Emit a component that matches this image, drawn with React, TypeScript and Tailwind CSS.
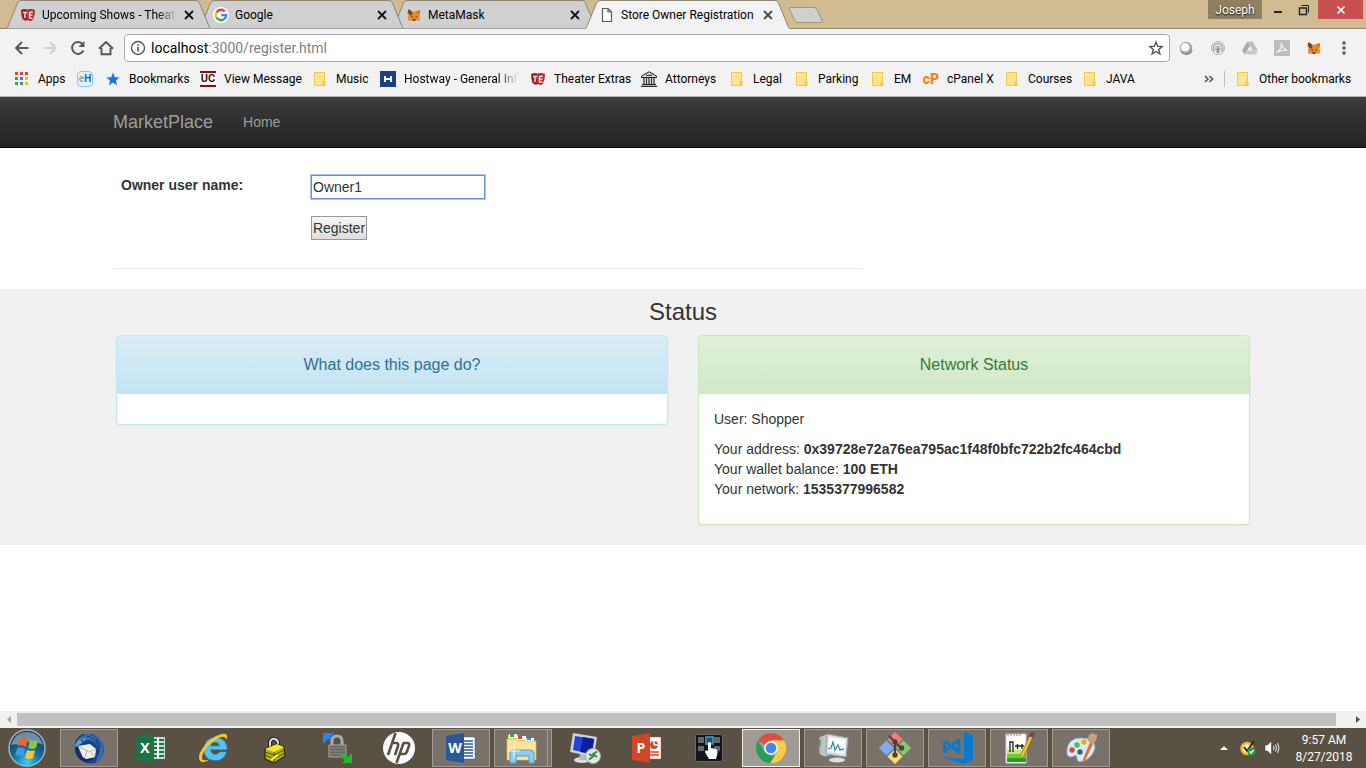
import React from 'react';

type IconProps = { className?: string };

const TEIcon = ({ className = 'size-4' }: IconProps) => (
  <svg viewBox="0 0 16 16" className={className} aria-hidden="true">
    <path d="M1 3 Q4 1.500 7.500 2.500 L8 13 Q5 15 2.500 12 Q1 8 1 3Z" fill="#a31f24" />
    <path d="M7.500 2.500 Q11 1.500 15 3 Q15 9 13 12.500 Q11 15 8 13Z" fill="#b3282d" />
    <path d="M3 5.500h4M5 5.500v5.500M9.500 5.200h3.500M9.500 5.200v5.800h3M9.500 8h3" stroke="#f7dcdc" strokeWidth="1.500" fill="none" />
  </svg>
);

const GoogleIcon = () => (
  <svg viewBox="0 0 16 16" className="size-4" aria-hidden="true">
    <circle cx="8" cy="8" r="8" fill="#fff" />
    <g fill="none" strokeWidth="2.400">
      <path d="M11.800 4.300A5.200 5.200 0 0 0 3.500 5.500" stroke="#ea4335" />
      <path d="M3.500 5.500A5.200 5.200 0 0 0 3.500 10.600" stroke="#fbbc05" />
      <path d="M3.500 10.600A5.200 5.200 0 0 0 11.300 12" stroke="#34a853" />
      <path d="M11.300 12A5.200 5.200 0 0 0 13.200 8.100H8.200" stroke="#4285f4" />
    </g>
  </svg>
);

const FoxIcon = () => (
  <svg viewBox="0 0 16 16" className="size-4" aria-hidden="true">
    <path d="M2.500 2l3.500 2.500h4L14 3l-.5 5 .5 4-1 2-3-1-2 1-3-.5-2.500.5-.5-4L3 7Z" fill="#f08a24" />
    <path d="M2.500 2l3.500 2.500.5 3.500L4 8.500 1.500 6Z" fill="#7b4a28" />
    <path d="M14 3l-4 1.500 1 2.500 2.500.5Z" fill="#d9731a" />
    <path d="M6 12h4l-1 2H7Z" fill="#6b4a34" />
    <path d="M5.500 9.500l1.500.8M11 9.500l-1.500.8" stroke="#3a2a1c" />
    <path d="M2.500 14L5 11.500l.5 2Z" fill="#c9a17d" />
  </svg>
);

const PageIcon = () => (
  <svg viewBox="0 0 16 16" className="size-4" fill="#fff" stroke="#5a5a5a" strokeWidth="1.200" aria-hidden="true">
    <path d="M3.500 1.500h5.500l3.500 3.500v9.500h-9ZM9 1.500V5h3.500" />
  </svg>
);

const FolderIcon = () => (
  <svg viewBox="0 0 16 16" className="size-4 shrink-0" aria-hidden="true">
    <path d="M2.500 1.500h10v13h-10Z" fill="#ffe58f" stroke="#f0c948" />
    <path d="M11.500 10.500h1.500v4h-2v-3.500Z" fill="#ffe58f" stroke="#e9bd35" />
  </svg>
);

const AppsIcon = () => (
  <svg viewBox="0 0 16 16" className="size-4" aria-hidden="true">
    <path d="M1 1h3v3h-3zM6 1h3v3h-3zM11 1h3v3h-3z" fill="#ea4335" />
    <path d="M1 6h3v3h-3z" fill="#34a853" />
    <path d="M6 6h3v3h-3z" fill="#1e88e5" />
    <path d="M11 6h3v3h-3z" fill="#fbbc05" />
    <path d="M1 11h3v3h-3zM6 11h3v3h-3z" fill="#34a853" />
    <path d="M11 11h3v3h-3z" fill="#fbbc05" />
  </svg>
);

const StarIcon = () => (
  <svg viewBox="0 0 16 16" className="size-4" aria-hidden="true">
    <path d="M8 1.500l1.800 4.700 4.900.2-3.800 3.100 1.300 4.900L8 11.600l-4.200 2.800 1.300-4.900L1.300 6.400l4.900-.2Z" fill="#1a73e8" />
  </svg>
);

const CourtIcon = () => (
  <svg viewBox="0 0 16 16" className="size-4" aria-hidden="true">
    <path d="M.5 5L8 .8 15.500 5v1.500H.5Z" fill="#d8d8d8" stroke="#222" />
    <path d="M5 4.300h6" stroke="#222" />
    <path d="M3 7v6M5.500 7v6M8 7v6M10.500 7v6M13 7v6" stroke="#333" strokeWidth="1.300" />
    <path d="M1 13.500h14M0 15.300h16" stroke="#222" strokeWidth="1.200" />
  </svg>
);

const EhIcon = () => (
  <span className="flex size-4 items-center justify-center rounded-sm border border-[#86c8f5] bg-[#e3f3fd] text-[10px] font-bold leading-none text-[#1568a8]">
    <span className="text-[#9aa5ad]">e</span>H
  </span>
);

const UcIcon = () => (
  <span className="flex size-4 items-center justify-center border-y-2 border-[#8c1010] bg-white text-[11px] font-bold leading-none text-[#5d0c0c]">
    UC
  </span>
);

const HostwayIcon = () => (
  <svg viewBox="0 0 16 16" className="size-4" aria-hidden="true">
    <path d="M0 0h16v16H0Z" fill="#1f3f86" />
    <path d="M5 5v6M11 5v6M5 8h6" stroke="#fff" strokeWidth="1.800" />
  </svg>
);

const CpanelIcon = () => (
  <span className="flex size-4 items-center justify-center text-sm font-black leading-none text-[#f58220]">cP</span>
);

type Tab = { title: string; icon: React.ReactNode; active?: boolean; layer: string; fade?: boolean };

const tabs: Tab[] = [
  { title: 'Upcoming Shows - Theater Extras', icon: <TEIcon />, layer: 'z-30', fade: true },
  { title: 'Google', icon: <GoogleIcon />, layer: 'z-20' },
  { title: 'MetaMask', icon: <FoxIcon />, layer: 'z-10' },
  { title: 'Store Owner Registration', icon: <PageIcon />, active: true, layer: 'z-40' },
];

const BrowserTab = ({ tab }: { tab: Tab }) => (
  <div className={`relative -mr-3 flex h-[29px] w-[205px] items-center pl-3.5 pr-3.5 pt-px ${tab.layer}`}>
    <svg viewBox="0 0 205 29" preserveAspectRatio="none" className="absolute inset-0 size-full" aria-hidden="true">
      <path d="M0 29 L1.500 27.500 L11.500 3 Q12.500 .5 15 .5 H190 Q192.500 .5 193.500 3 L203.500 27.500 L205 29Z" fill={tab.active ? '#f2f2f2' : '#d0d0d0'} />
      <path d="M0 28.500 L1.500 27.500 L11.500 3 Q12.500 .5 15 .5 H190 Q192.500 .5 193.500 3 L203.500 27.500 L205 28.500" fill="none" stroke="#8e8672" />
      {!tab.active && <path d="M0 28.500H205" stroke="#9d9d9d" />}
    </svg>
    <button type="button" className="relative flex min-w-0 flex-1 items-center gap-1.5 text-left">
      <span className="shrink-0">{tab.icon}</span>
      <span className={`flex-1 overflow-hidden whitespace-nowrap ${tab.fade ? '[mask-image:linear-gradient(to_right,#000_85%,transparent)]' : ''}`}>{tab.title}</span>
    </button>
    <button type="button" aria-label={`Close ${tab.title}`} className="relative ml-1 size-4 shrink-0">
      <svg viewBox="0 0 16 16" className="size-4" stroke={tab.active ? '#4a4a4a' : '#111'} strokeWidth="1.800">
        <path d="M4 4l8 8M12 4l-8 8" />
      </svg>
    </button>
  </div>
);

const NavButton = ({ label, faded, children }: { label: string; faded?: boolean; children: React.ReactNode }) => (
  <button type="button" aria-label={label} className="flex size-7 items-center justify-center">
    <svg viewBox="0 0 16 16" className="size-4" fill="none" stroke={faded ? '#d0d0d0' : '#53565a'} strokeWidth="1.900">
      {children}
    </svg>
  </button>
);

const ExtIcons = () => (
  <div className="flex items-center gap-4">
    <button type="button" aria-label="Webex">
      <svg viewBox="0 0 16 16" className="size-4">
        <circle cx="8" cy="8" r="6.200" fill="#a6a6a6" />
        <circle cx="7.200" cy="7.300" r="4.300" fill="#fafafa" />
        <path d="M3 11a6 6 0 0 0 11-1" stroke="#8e8e8e" strokeWidth="1.500" fill="none" />
      </svg>
    </button>
    <button type="button" aria-label="Identity">
      <svg viewBox="0 0 16 16" className="size-4" fill="none">
        <circle cx="8" cy="8" r="6.600" stroke="#b5b5b5" />
        <path d="M4.500 11.500a4.800 4.800 0 1 1 7 0" stroke="#9c9c9c" strokeWidth="1.400" />
        <path d="M5.500 10a2.800 2.800 0 1 1 5 0" stroke="#9c9c9c" />
        <path d="M6.500 8q1.500-2 3 0v5h-3Z" fill="#8f8f8f" />
      </svg>
    </button>
    <button type="button" aria-label="Google Drive">
      <svg viewBox="0 0 16 16" className="size-4">
        <path d="M5.500 1.500h5L16 10.500h-5Z" fill="#bdbdbd" />
        <path d="M5.500 1.500L8 5.800 2.700 14.500 0 10.500Z" fill="#a9a9a9" />
        <path d="M5.200 10.500H16l-2.500 4H2.700Z" fill="#c9c9c9" />
      </svg>
    </button>
    <button type="button" aria-label="Acrobat">
      <svg viewBox="0 0 16 16" className="size-4">
        <path d="M0 0h16v16H0Z" fill="#bdbdbd" />
        <path d="M2.500 12.500C6 11 8.500 6 7.500 3c-1 0-.5 5 6 7.500-3-1-7 0-11 2Z" stroke="#f5f5f5" strokeWidth="1.200" fill="none" />
      </svg>
    </button>
    <button type="button" aria-label="MetaMask"><FoxIcon /></button>
  </div>
);

type Bookmark = { label: string; icon: React.ReactNode; width: string; fade?: boolean };

const bookmarks: Bookmark[] = [
  { label: 'Apps', icon: <AppsIcon />, width: 'w-[63px]' },
  { label: '', icon: <EhIcon />, width: 'w-7' },
  { label: 'Bookmarks', icon: <StarIcon />, width: 'w-[95px]' },
  { label: 'View Message', icon: <UcIcon />, width: 'w-28' },
  { label: 'Music', icon: <FolderIcon />, width: 'w-[68px]' },
  { label: 'Hostway - General Information', icon: <HostwayIcon />, width: 'w-[150px]', fade: true },
  { label: 'Theater Extras', icon: <TEIcon />, width: 'w-[111px]' },
  { label: 'Attorneys', icon: <CourtIcon />, width: 'w-[88px]' },
  { label: 'Legal', icon: <FolderIcon />, width: 'w-[65px]' },
  { label: 'Parking', icon: <FolderIcon />, width: 'w-[76px]' },
  { label: 'EM', icon: <FolderIcon />, width: 'w-[53px]' },
  { label: 'cPanel X', icon: <CpanelIcon />, width: 'w-[81px]' },
  { label: 'Courses', icon: <FolderIcon />, width: 'w-[78px]' },
  { label: 'JAVA', icon: <FolderIcon />, width: 'w-[60px]' },
];

const BookmarkLink = ({ item }: { item: Bookmark }) => (
  <a href="#" aria-label={item.label || 'eH'} className={`flex shrink-0 items-center gap-2 pr-3 ${item.width}`}>
    <span className="shrink-0">{item.icon}</span>
    {item.label && (
      <span className={`whitespace-nowrap ${item.fade ? 'overflow-hidden [mask-image:linear-gradient(to_right,#000_82%,transparent)]' : ''}`}>
        {item.label}
      </span>
    )}
  </a>
);

const BrowserChrome = () => (
  <header className="text-black">
    <div className="flex h-[29px] justify-between border-b border-[#8e8672] bg-[#d1bb93] pl-1.5">
      <div className="flex h-[29px]">
        {tabs.map((tab) => <BrowserTab key={tab.title} tab={tab} />)}
        <button type="button" aria-label="New tab" className="ml-2.5 mt-1.5 h-[18px] w-9">
          <svg viewBox="0 0 36 18" className="h-[18px] w-9">
            <path d="M2 1.500h24q2 0 3 2l5 11q1 2-1 2H10q-2 0-3-2L1.500 3.500q-1-2 1-2Z" fill="#d0d0d0" stroke="#a39678" />
          </svg>
        </button>
      </div>
      <div className="flex h-[19px]">
        <button type="button" className="h-[19px] w-[54px] bg-[#917f60] text-white [text-shadow:0_1px_2px_#000]">Joseph</button>
        <button type="button" aria-label="Minimize" className="flex w-7 items-center justify-center pl-1 pt-1">
          <span className="h-0.5 w-2 bg-[#222]" />
        </button>
        <button type="button" aria-label="Restore" className="flex w-7 items-center justify-center">
          <svg viewBox="0 0 12 12" className="size-3" fill="none" stroke="#222">
            <path d="M1.500 4h7v6.500h-7Z" strokeWidth="1.400" />
            <path d="M3.500 1.500h7v7" />
          </svg>
        </button>
        <button type="button" aria-label="Close" className="mr-[3px] flex w-[45px] items-center justify-center bg-[#c75050]">
          <svg viewBox="0 0 10 10" className="size-2.5" stroke="#fff" strokeWidth="1.600"><path d="M1.500 1.500l7 7M8.500 1.500l-7 7" /></svg>
        </button>
      </div>
    </div>

    <div className="flex h-[34px] items-center gap-3 bg-[#f2f2f2] pl-2 pr-3.5 pt-1">
      <div className="flex items-center">
        <NavButton label="Back"><path d="M14.500 8H2.500M8 2L2 8l6 6" /></NavButton>
        <NavButton label="Forward" faded><path d="M1.500 8h12M8 2l6 6-6 6" /></NavButton>
        <NavButton label="Reload">
          <path d="M13.500 10.500A6 6 0 1 1 13 4.500" />
          <path d="M14.500 1v6h-6Z" fill="#53565a" stroke="none" />
        </NavButton>
        <NavButton label="Home"><path d="M1 8.800L8 2l7 6.800M3.500 8v6.300h9V8" /></NavButton>
      </div>
      <div className="-ml-2 flex h-7 flex-1 items-center gap-[5px] rounded-sm border border-[#a9a9a9] bg-white px-[5px]">
        <svg viewBox="0 0 16 16" className="size-4 shrink-0" fill="none" stroke="#53565a" strokeWidth="1.400" aria-hidden="true">
          <circle cx="8" cy="8" r="6.500" />
          <path d="M8 7v4.500M8 4.200v1.600" strokeWidth="1.700" />
        </svg>
        <div className="relative flex-1 text-sm leading-5">
          <span aria-hidden="true" className="pointer-events-none absolute inset-0 text-[#808080]">
            <span className="text-black">localhost</span>:3000/register.html
          </span>
          <input aria-label="Address" defaultValue="localhost:3000/register.html" className="block w-full bg-transparent text-transparent outline-none" />
        </div>
        <button type="button" aria-label="Bookmark this page">
          <svg viewBox="0 0 16 16" className="size-4" fill="none" stroke="#53565a" strokeWidth="1.400">
            <path d="M8 2l1.700 4.300 4.500.3-3.500 2.900 1.200 4.500L8 11.500 4.100 14l1.200-4.500L1.800 6.600l4.500-.3Z" />
          </svg>
        </button>
      </div>
      <div className="-ml-1 flex items-center gap-3.5">
        <ExtIcons />
        <button type="button" aria-label="Menu">
          <svg viewBox="0 0 16 16" className="size-4" fill="#53565a">
            <path d="M6.500 1.500h3v3h-3zM6.500 6.500h3v3h-3zM6.500 11.500h3v3h-3z" />
          </svg>
        </button>
      </div>
    </div>

    <nav aria-label="Bookmarks" className="flex h-[34px] items-center justify-between border-b border-[#b6b4b6] bg-[#f2f2f2] px-3.5 pb-0.5">
      <div className="flex min-w-0 items-center overflow-hidden">
        {bookmarks.map((item) => <BookmarkLink key={item.label} item={item} />)}
      </div>
      <div className="flex shrink-0 items-center">
        <button type="button" aria-label="More bookmarks" className="mr-2.5">
          <svg viewBox="0 0 10 8" className="h-2 w-2.5" fill="none" stroke="#53565a" strokeWidth="1.600"><path d="M1 1l3 3-3 3M5.500 1l3 3-3 3" /></svg>
        </button>
        <span className="mr-2.5 h-4 w-px bg-[#bdbdbd]" />
        <a href="#" className="flex w-[117px] items-center gap-2 whitespace-nowrap"><FolderIcon />Other bookmarks</a>
      </div>
    </nav>
  </header>
);

const Page = () => (
  <main className="flex-1 bg-white font-['Liberation_Sans',Arial,sans-serif] text-sm leading-5 text-[#333]">
    <nav className="border-b border-[#080808] bg-linear-to-b from-[#3c3c3c] to-[#222] text-[#9d9d9d]">
      <div className="mx-auto flex h-[50px] max-w-[1170px] items-center gap-[30px] px-[15px]">
        <a href="#" className="text-lg leading-5">MarketPlace</a>
        <a href="#">Home</a>
      </div>
    </nav>

    <div className="mx-auto max-w-[1170px] px-[15px] pt-[27px]">
      <form className="grid w-[750px] max-w-full grid-cols-[190px_1fr] items-start gap-y-[17px] border-b border-[#eee] pb-7 pl-2">
        <label htmlFor="owner" className="font-bold">Owner user name:</label>
        <input id="owner" defaultValue="Owner1" className="h-6 w-[174px] border border-[#6791dc] bg-white px-px ring-1 ring-[#a8c4f5] outline-none" />
        <button type="submit" className="col-start-2 h-6 w-14 border border-[#999] bg-linear-to-b from-[#f6f6f6] to-[#dedede]">Register</button>
      </form>
    </div>

    <section className="mt-5 bg-[#f1f1f1] pb-5 pt-2.5">
      <h2 className="text-center text-2xl leading-[26px]">Status</h2>
      <div className="mx-auto mt-2.5 grid max-w-[1170px] grid-cols-2 items-start gap-[30px] px-[18px]">
        <article className="overflow-hidden rounded border border-[#bce8f1] bg-white shadow-xs">
          <h3 className="bg-linear-to-b from-[#d9edf7] to-[#c4e3f3] py-[19px] text-center text-base leading-5 text-[#31708f]">What does this page do?</h3>
          <div className="h-[30px]" />
        </article>
        <article className="overflow-hidden rounded border border-[#c9e7ba] bg-white shadow-xs">
          <h3 className="bg-linear-to-b from-[#dff0d8] to-[#d0e9c6] py-[19px] text-center text-base leading-5 text-[#3c763d]">Network Status</h3>
          <div className="px-[15px] pb-[25px] pt-[15px]">
            <p className="mb-2.5">User: Shopper</p>
            <p>Your address: <strong>0x39728e72a76ea795ac1f48f0bfc722b2fc464cbd</strong></p>
            <p>Your wallet balance: <strong>100 ETH</strong></p>
            <p>Your network: <strong>1535377996582</strong></p>
          </div>
        </article>
      </div>
    </section>
  </main>
);

const OfficeIcon = ({ color, letter, kind }: { color: string; letter: string; kind: 'grid' | 'lines' | 'chart' }) => (
  <svg viewBox="0 0 32 32" className="size-8" aria-hidden="true">
    <path d="M15 5h15v22H15Z" fill="#fff" stroke={color} strokeWidth=".5" />
    {kind === 'grid' && <path d="M18 8h4M18 12h4M18 16h4M18 20h4M18 24h4M24 8h5M24 12h5M24 16h5M24 20h5M24 24h5" stroke={color} strokeWidth="2.500" />}
    {kind === 'lines' && <path d="M19 9h9M19 12h9M19 15h9M19 18h9M19 21h9M19 24h9" stroke={color} strokeWidth="1.300" />}
    {kind === 'chart' && (
      <>
        <circle cx="23" cy="13" r="4" fill={color} />
        <path d="M23 13V8.500M23 13h5" stroke="#fff" strokeWidth="1.500" />
        <path d="M19 20h9M19 23h9" stroke={color} strokeWidth="1.600" />
      </>
    )}
    <path d="M1 4L19 1v30L1 28Z" fill={color} />
    <text x="10" y="21" textAnchor="middle" fontFamily="Open Sans" fontWeight="700" fontSize="14" fill="#fff">{letter}</text>
  </svg>
);

const ThunderbirdIcon = () => (
  <svg viewBox="0 0 32 32" className="size-8" aria-hidden="true">
    <path d="M2 15Q1 6 10 2l6 1q12 0 15 12 0 11-8 16-10 2-16-4Q1 22 2 15Z" fill="#1c3f86" />
    <path d="M8 5Q16-1 24 4q8 6 6 15-1 8-8 12 5-9 2-17Q20 6 9 9L2 15Q3 8 8 5Z" fill="#2f74b8" />
    <path d="M17 2q9 3 11 14M14 4q11 2 12 16M23 7q5 8 2 17" stroke="#173a7c" fill="none" />
    <path d="M5 14l12-2 6 5-1 8-11 3Z" fill="#f2f0ea" />
    <path d="M5 14l11 6 7-3M11 28l3-9M22 25l-4-5" stroke="#a9a59c" fill="none" strokeWidth=".8" />
    <path d="M5 15q0 9 8 12l7-1q-3 5-10 3Q1 25 3 15Z" fill="#142c66" />
    <path d="M2 13q4-8 11-6l-4 4-6 4Z" fill="#58a0da" />
    <circle cx="9" cy="8.500" r="1" fill="#0a1c40" />
  </svg>
);

const IeIcon = () => (
  <svg viewBox="0 0 32 32" className="size-8" aria-hidden="true">
    <path d="M30 17.500H13.500q.5 5 5 5 3 0 4-2.500h7q-2.500 8.500-11.500 8.500-11-1-11-11.500Q8 6 18 5.500 30 6 30 17.500ZM13.500 14h9q-.5-4-4.500-4t-4.500 4Z" fill="#55c3f5" stroke="#279bd3" strokeWidth=".6" />
    <path d="M3 29C-2 22 13 4 25 2c6-1 6 3 4 6 0-4-4-4-9-1C11 12 2 24 6 28q3 1 7-1-6 5-10 2Z" fill="#f7c52c" />
  </svg>
);

const PadlockIcon = () => (
  <svg viewBox="0 0 32 32" className="size-8" aria-hidden="true">
    <path d="M11 16v-6q1-4 5-3 3 1 3 4v4" fill="none" stroke="#222" strokeWidth="4" />
    <path d="M11 16v-6q1-4 5-3 3 1 3 4v4" fill="none" stroke="#ddd" strokeWidth="2" />
    <path d="M6 17l12-5 7 3 1 9-11 7-9-4Z" fill="#b5b010" stroke="#161600" />
    <path d="M6 17l9 3 10-5-7-3Z" fill="#f0e920" />
    <path d="M15 20v11M6 20l9 3 10-5M6 23l9 4 11-6" stroke="#555100" fill="none" />
    <path d="M12 28l7-5" stroke="#fff64d" strokeWidth="2" />
  </svg>
);

const SyncLockIcon = () => (
  <svg viewBox="0 0 32 32" className="size-8" aria-hidden="true">
    <path d="M11 14V9q0-5 5-5t5 5v5" fill="none" stroke="#aaa" strokeWidth="3" />
    <path d="M8 13h17v12H8Z" fill="#666" stroke="#aaa" />
    <path d="M8 16h16M8 19h16M8 22h16" stroke="#888" />
    <path d="M2 1h11l-3 3v4L7 7l-5 5Z" fill="#2487ec" />
    <path d="M31 31H21l3-3-5-3 3-4 5 4 4-4Z" fill="#24b92c" />
  </svg>
);

const HpIcon = () => (
  <svg viewBox="0 0 32 32" className="size-8" aria-hidden="true">
    <circle cx="16" cy="16" r="16" fill="#fff" />
    <path d="M12.500 1L5 23M9 11h4q3 0 2 3l-3 9M20.500 11L13.500 31M20 11h4q3 0 2 3l-2.500 6.500q-.5 1.500-2.500 1.500h-4" fill="none" stroke="#5a5145" strokeWidth="2.600" />
  </svg>
);

const ExplorerIcon = () => (
  <svg viewBox="0 0 32 32" className="size-8" aria-hidden="true">
    <path d="M3 3h10l2 3h14v20H3Z" fill="#efcf68" />
    <path d="M4 2h8v4H4Z" fill="#fff" /><path d="M5 2h4v3H5Z" fill="#2fae3c" />
    <path d="M12 4h9v4h-9Z" fill="#fff" /><path d="M13 4h4v3h-4Z" fill="#d84a38" />
    <path d="M20 6h9v3h-9Z" fill="#fff" /><path d="M22 6h4v2h-4Z" fill="#2e8fda" />
    <path d="M2 7h9l2 2h18v19H2Z" fill="#f8e49b" stroke="#dfba55" strokeWidth=".7" />
    <path d="M5 31V21q0-3 3-3h17q4 0 4 3v10h-5v-7H11v7Z" fill="#8dcdef" stroke="#4c9fcd" />
    <path d="M9 12v14M4 19h11" stroke="#fff" />
  </svg>
);

const RemoteIcon = () => (
  <svg viewBox="0 0 32 32" className="size-8" aria-hidden="true">
    <ellipse cx="13" cy="28" rx="8" ry="3" fill="#ddd" />
    <path d="M11 21h6l1 7h-8Z" fill="#bbb" />
    <path d="M4 1l24 4-3 20L1 20Z" fill="#cdd3da" />
    <path d="M6 4l19 3-2 15L4 18Z" fill="#2045d8" />
    <path d="M14 5l11 2-2 15-12-2Z" fill="#0c209a" />
    <circle cx="24" cy="24" r="7.500" fill="#e7e7e7" stroke="#aaa" />
    <path d="M20 22l4 2.500-4 3M28 19.500l-4 2.500 4 3" stroke="#278b37" strokeWidth="1.800" fill="none" />
  </svg>
);

const TouchIcon = () => (
  <svg viewBox="0 0 32 32" className="size-8" aria-hidden="true">
    <rect x="2.500" y="2.500" width="27" height="27" rx="2" fill="#12161c" stroke="#6a6a6a" />
    <path d="M5 5h6v6H5ZM21 5h6v6h-6ZM5 14h6v5H5ZM21 14h6v5h-6Z" fill="#666" />
    <path d="M13 5h7v7h-7Z" fill="#394652" stroke="#2babd8" strokeWidth="1.500" />
    <path d="M15 11q1.500-2 3 0v5l5 1q2 1 1.500 4L23 27h-7l-4-7q0-3 3-1Z" fill="#fff" />
  </svg>
);

const ChromeIcon = () => (
  <svg viewBox="0 0 32 32" className="size-8" aria-hidden="true">
    <path d="M16 16L3 8.500A15 15 0 0 1 29 8.500H16Z" fill="#de4f43" />
    <path d="M16 8.500H29A15 15 0 0 1 15 31L22.500 19.500Z" fill="#fdcf3e" />
    <path d="M3 8.500L9.500 19.700 16 23.500h4L15 31A15 15 0 0 1 3 8.500Z" fill="#259f57" />
    <circle cx="16" cy="16" r="7" fill="#f1f1f1" />
    <circle cx="16" cy="16" r="5.300" fill="#4587ef" />
  </svg>
);

const MonitorIcon = () => (
  <svg viewBox="0 0 32 32" className="size-8" aria-hidden="true">
    <path d="M2 5l7-3 4 2v20l-6 1-5-3Z" fill="#bec2c4" stroke="#777" />
    <path d="M3 8v6" stroke="#50ad45" strokeWidth="2" />
    <ellipse cx="20" cy="28" rx="8" ry="2.500" fill="#ddd" />
    <path d="M10 2l21 4-2 19-20-3Z" fill="#dde1e4" stroke="#9ba0a3" />
    <path d="M12 5l17 3-2 14-16-3Z" fill="#fafdff" />
    <path d="M11 17l3-1 2-6 2 8 3-5 2 5 4-1" stroke="#318bc2" fill="none" strokeWidth="1.300" />
  </svg>
);

const GitIcon = () => (
  <svg viewBox="0 0 32 32" className="size-8" aria-hidden="true">
    <path d="M16 0l7.500 7.500-7.500 7.500-7.500-7.500Z" fill="#f77e79" />
    <path d="M24.500 8.500L32 16l-7.500 7.500L17 16Z" fill="#86c968" />
    <path d="M7.500 8.500L15 16l-7.500 7.500L0 16Z" fill="#7dacf5" />
    <path d="M16 17l7.500 7.500L16 32l-7.500-7.500Z" fill="#fbdc70" />
    <path d="M10 4l6 6v13M16 10l6 6" stroke="#4a443f" strokeWidth="2" fill="none" />
    <circle cx="16" cy="10" r="2.700" fill="#4a443f" /><circle cx="16" cy="23" r="2.700" fill="#4a443f" /><circle cx="22.500" cy="16" r="2.700" fill="#4a443f" />
  </svg>
);

const CodeIcon = () => (
  <svg viewBox="0 0 32 32" className="size-8" aria-hidden="true">
    <path d="M23 0l9 3v25l-9 4L0 25l23 2Z" fill="#0879ce" />
    <path d="M18 7v13L4 9M18 8L4 19 3 10" stroke="#0879ce" strokeWidth="3" fill="none" />
  </svg>
);

const NotepadIcon = () => (
  <svg viewBox="0 0 32 32" className="size-8" aria-hidden="true">
    <path d="M3 2h20v29H3Z" fill="#fff" stroke="#d3d3d3" />
    <path d="M4 14h19v4H4Z" fill="#eefbd5" /><path d="M4 18h19v4H4Z" fill="#bdeb72" /><path d="M4 22h19v4H4Z" fill="#72c830" /><path d="M4 26h19v4H4Z" fill="#22a026" />
    <path d="M5 1v3M8 1v3M11 1v3M14 1v3M17 1v3" stroke="#888" />
    <path d="M7 20V10h3v10M12 14h5M14.500 12v5M17 14h4M19 12v5" stroke="#222" strokeWidth="1.300" fill="none" />
    <path d="M29 3L19 24" stroke="#a26a16" strokeWidth="4" /><path d="M29 3L19 24" stroke="#f6c72b" strokeWidth="2.500" />
    <path d="M30 0l-2 5" stroke="#7a3f59" strokeWidth="4" />
  </svg>
);

const PaintIcon = () => (
  <svg viewBox="0 0 32 32" className="size-8" aria-hidden="true">
    <path d="M2 17Q4 6 16 6q13 0 14 9-1 8-9 13-8 4-9-1 0-5-3-3Q1 28 2 17Z" fill="#d8ecf7" stroke="#86b9d4" />
    <circle cx="7" cy="18" r="2.700" fill="#e2453a" /><circle cx="12" cy="13" r="2.700" fill="#55b947" /><circle cx="19" cy="10" r="2.700" fill="#f7a823" /><circle cx="15" cy="20" r="2.700" fill="#39616f" />
    <path d="M25 10l3 2-9 19-2-1Z" fill="#d87830" />
    <path d="M23 9q-1-5 4-8 4 2 5 1 1 6-4 10Z" fill="#c7a177" />
  </svg>
);

type TaskItem = { label: string; icon: React.ReactNode; state?: 'open' | 'active'; stacked?: boolean };

const tasks: TaskItem[] = [
  { label: 'Thunderbird', icon: <ThunderbirdIcon />, state: 'open' },
  { label: 'Excel', icon: <OfficeIcon color="#1f7244" letter="X" kind="grid" /> },
  { label: 'Internet Explorer', icon: <IeIcon /> },
  { label: 'Password Safe', icon: <PadlockIcon /> },
  { label: 'WinSCP', icon: <SyncLockIcon /> },
  { label: 'HP', icon: <HpIcon /> },
  { label: 'Word', icon: <OfficeIcon color="#2b579a" letter="W" kind="lines" />, state: 'open' },
  { label: 'File Explorer', icon: <ExplorerIcon />, state: 'open', stacked: true },
  { label: 'Remote Desktop', icon: <RemoteIcon /> },
  { label: 'PowerPoint', icon: <OfficeIcon color="#d24625" letter="P" kind="chart" /> },
  { label: 'Touch', icon: <TouchIcon /> },
  { label: 'Chrome', icon: <ChromeIcon />, state: 'active' },
  { label: 'Task Manager', icon: <MonitorIcon />, state: 'open' },
  { label: 'Git', icon: <GitIcon />, state: 'open' },
  { label: 'Visual Studio Code', icon: <CodeIcon />, state: 'open' },
  { label: 'Notepad++', icon: <NotepadIcon />, state: 'open' },
  { label: 'Paint', icon: <PaintIcon />, state: 'open' },
];

const taskStyles = {
  none: 'border-transparent',
  open: 'border-[#a49d92] bg-[#78726a]',
  active: 'border-[#f0eee9] bg-[#a09b93]',
};

const TaskButton = ({ task }: { task: TaskItem }) => {
  const frame = taskStyles[task.state ?? 'none'];
  if (task.stacked) {
    return (
      <button type="button" aria-label={task.label} className="flex h-[38px] w-[58px]">
        <span className={`flex h-full w-[54px] items-center justify-center border ${frame}`}>{task.icon}</span>
        <span className={`h-full w-1 border-y border-r ${frame}`} />
      </button>
    );
  }
  return (
    <button type="button" aria-label={task.label} className={`flex h-[38px] w-[58px] items-center justify-center border ${frame}`}>
      {task.icon}
    </button>
  );
};

const Taskbar = () => (
  <footer className="flex h-10 items-center justify-between bg-[#5a5145] pl-1.5 pr-2.5 text-white">
    <div className="flex items-center">
      <button type="button" aria-label="Start" className="mr-3.5">
        <svg viewBox="0 0 40 40" className="size-10">
          <defs>
            <radialGradient id="orb" cx=".5" cy=".9" r=".8">
              <stop offset="0" stopColor="#2fd2fb" /><stop offset=".5" stopColor="#15689b" /><stop offset="1" stopColor="#173b58" />
            </radialGradient>
          </defs>
          <circle cx="21" cy="20" r="18" fill="url(#orb)" stroke="#a2b4bd" strokeWidth="1.500" />
          <path d="M5 17Q9 4 21 4t16 13q-8-5-16-3T5 17Z" fill="#b3d1df" opacity=".55" />
          <path d="M14 10q5-2 8 1l-2 8q-4-3-9-1Z" fill="#e86532" />
          <path d="M24 12q4 2 8 0l-2 8q-4 2-8 0Z" fill="#8cc63e" />
          <path d="M11 20q5-2 8 1l-2 8q-4-3-8-1Z" fill="#3c9be0" />
          <path d="M21 22q4 2 8 0l-2 8q-4 2-8 0Z" fill="#fbc42c" />
        </svg>
      </button>
      <div className="flex items-center gap-1">
        {tasks.map((task) => <TaskButton key={task.label} task={task} />)}
      </div>
    </div>
    <div className="flex items-center">
      <button type="button" aria-label="Show hidden icons" className="mr-3">
        <svg viewBox="0 0 8 4" className="h-1 w-2" fill="#fff"><path d="M0 4l4-4 4 4Z" /></svg>
      </button>
      <svg viewBox="0 0 16 16" className="mr-2 size-4" aria-label="Security">
        <circle cx="7" cy="8.500" r="5.500" fill="#f8f4e6" stroke="#f4bd20" strokeWidth="2.500" />
        <path d="M4 7l3 4 7-10" stroke="#222" strokeWidth="1.800" fill="none" />
        <circle cx="11.500" cy="11.500" r="4" fill="#21a047" />
        <path d="M9.500 11.500l1.500 1.500 2.500-3" stroke="#fff" strokeWidth="1.300" fill="none" />
      </svg>
      <svg viewBox="0 0 16 16" className="mr-3 size-4" aria-label="Volume">
        <path d="M1 5h2.500l4-4v14l-4-4H1Z" fill="#fff" stroke="#333" strokeWidth=".5" />
        <path d="M9.500 6q1 2 0 4M11.500 4.500q2 3.500 0 7M13.500 3q3 5 0 10" stroke="#eee" fill="none" />
      </svg>
      <div className="w-16 pt-0.5 text-center leading-[17px]">
        <div>9:57 AM</div>
        <div>8/27/2018</div>
      </div>
    </div>
  </footer>
);

const Scrollbar = () => (
  <div className="flex h-[17px] items-center bg-[#f1f1f1]">
    <button type="button" aria-label="Scroll left" className="flex w-[17px] justify-center">
      <svg viewBox="0 0 4 7" className="h-[7px] w-1" fill="#a3a3a3"><path d="M4 0v7L0 3.500Z" /></svg>
    </button>
    <div className="flex-1"><div className="h-[13px] w-[99%] bg-[#c1c1c1]" /></div>
    <button type="button" aria-label="Scroll right" className="flex w-[17px] justify-center">
      <svg viewBox="0 0 4 7" className="h-[7px] w-1" fill="#505050"><path d="M0 0v7l4-3.500Z" /></svg>
    </button>
  </div>
);

export default function App() {
  return (
    <div className="flex min-h-screen flex-col font-['Roboto','Noto_Sans',sans-serif] text-xs">
      <BrowserChrome />
      <Page />
      <Scrollbar />
      <Taskbar />
    </div>
  );
}
